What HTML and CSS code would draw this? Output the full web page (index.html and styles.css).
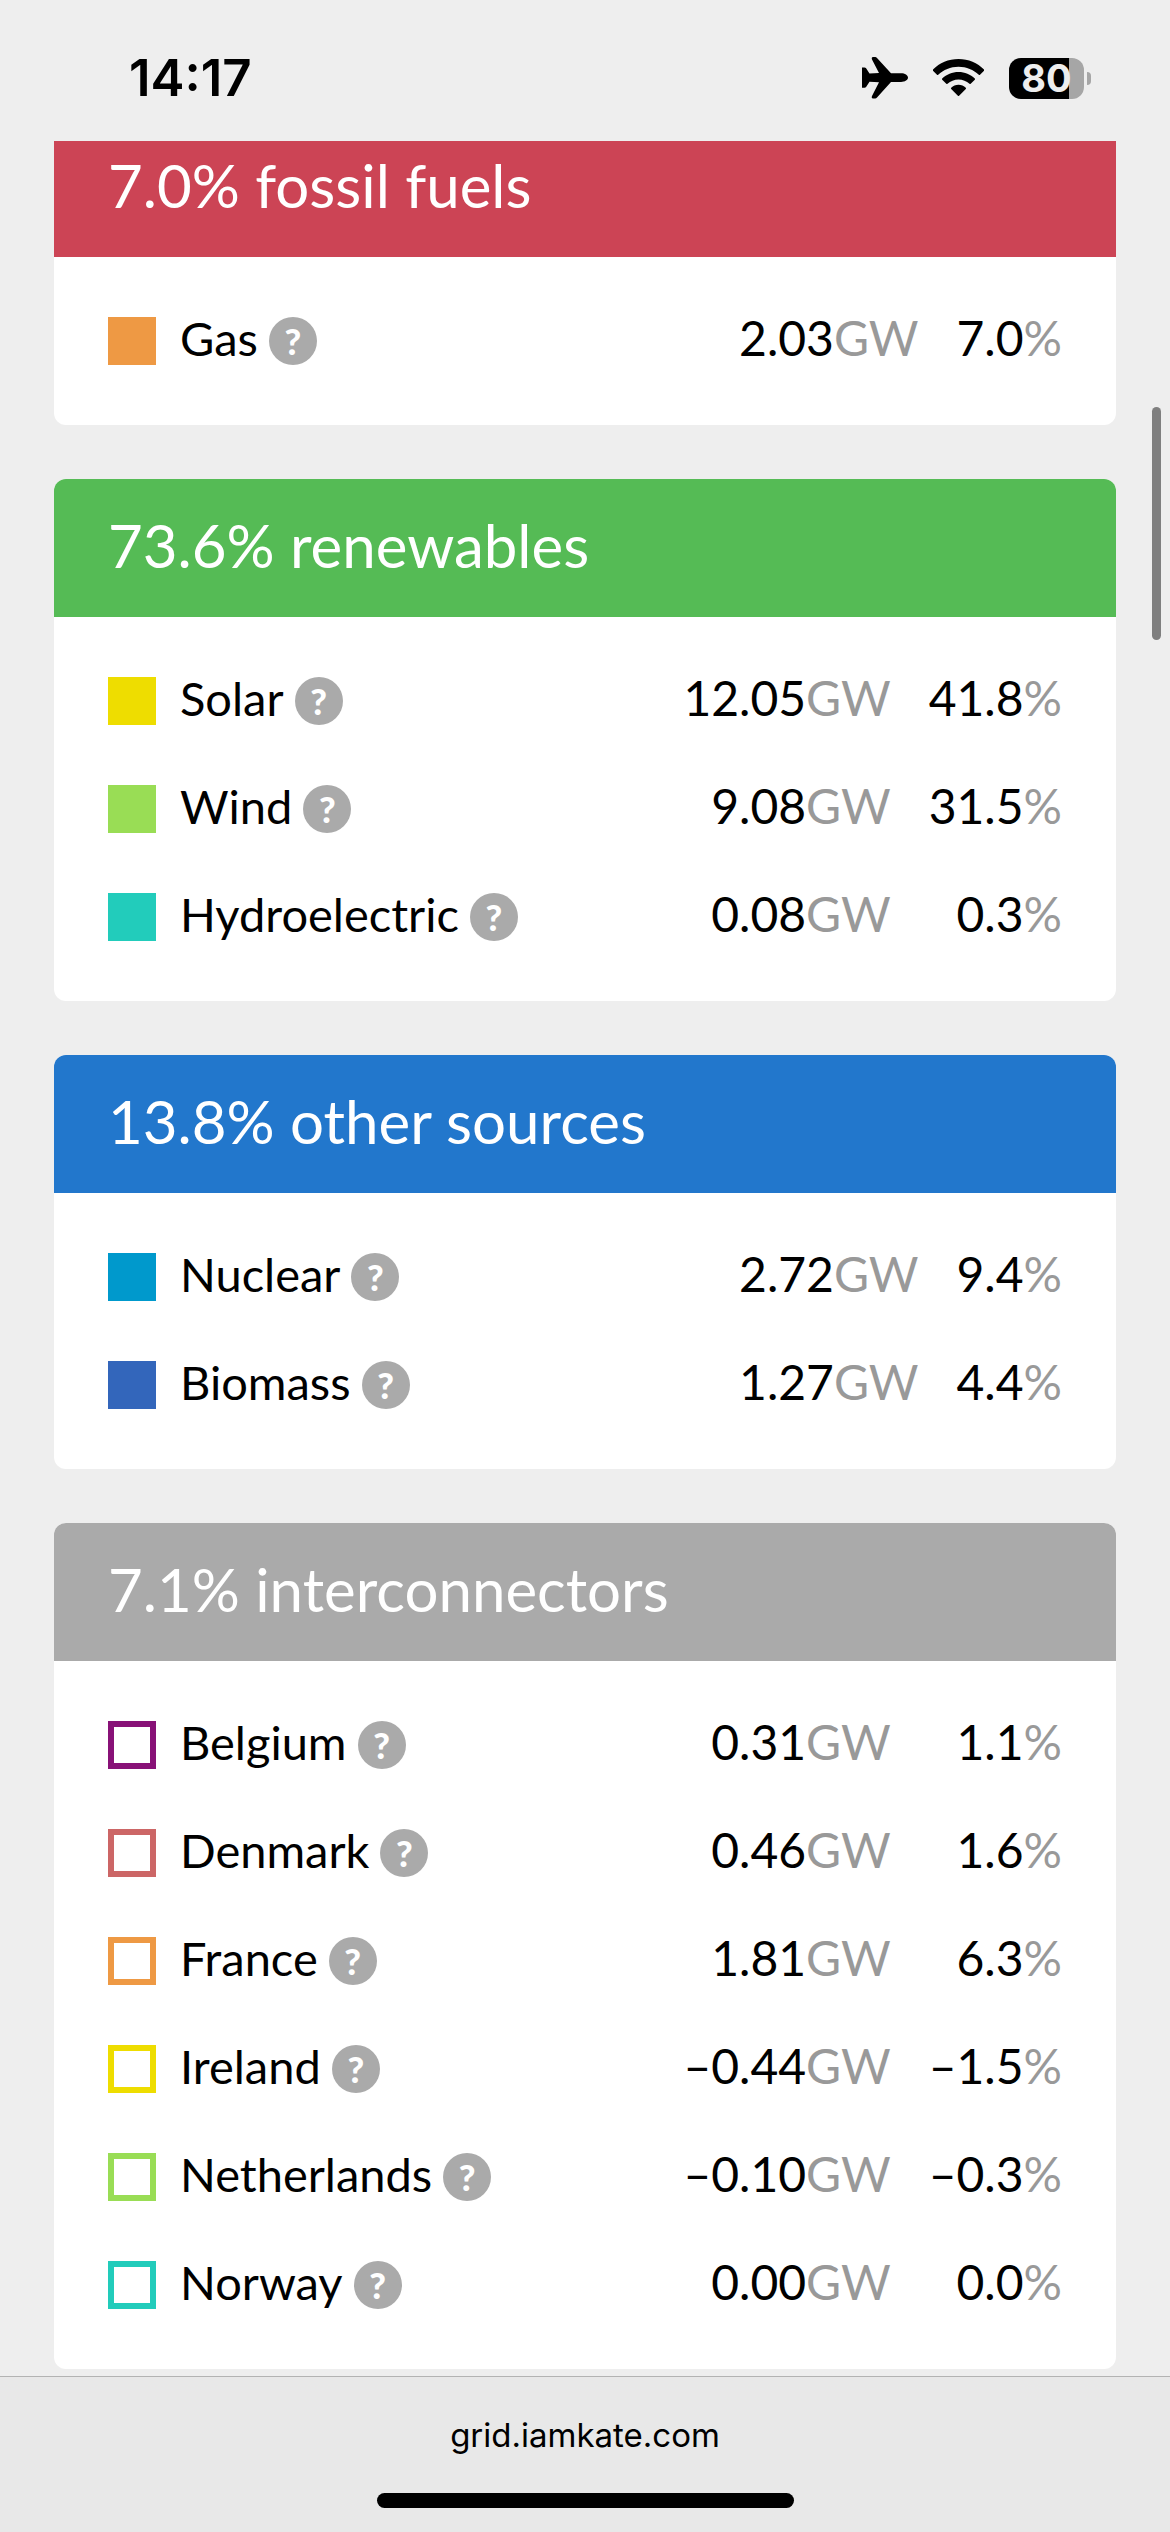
FILE: index.html
```html
<!DOCTYPE html>
<html lang="en">
<head>
<meta charset="utf-8">
<meta name="viewport" content="width=device-width, initial-scale=1">
<title>National Grid: Live</title>
<link rel="stylesheet" href="styles.css">
</head>
<body>
<header class="status">
  <time class="clock">14:17</time>
  <div class="indicators">
    <svg class="plane" viewBox="0 0 46 42" aria-hidden="true"><path d="M0 10.500h2.500q1 0 1.600.8L7.500 16.500 17 16 10 2.500Q9.200 0 11 0h2.200q1 0 1.800.9L29 16.200h10c4 0 7 2 7 4.400s-3 4.400-7 4.400H29L15 40.500q-.8.900-1.800.9H11q-1.800 0-1-2.500L17 25.200l-9.500-.5L4.100 30q-.6.800-1.600.8H0V21z"/></svg>
    <svg class="wifi" viewBox="0 0 51 38" aria-hidden="true"><path d="M25.500 0C35.500 0 44.500 4 51 10.500q.5.600 0 1.200l-4 4q-.6.500-1.200 0C40.500 10.700 33.500 7.700 25.500 7.700S10.500 10.700 5.200 15.700q-.6.500-1.200 0l-4-4q-.5-.6 0-1.200C6.500 4 15.500 0 25.500 0z"/><path d="M25.500 13c6.300 0 12 2.500 16.300 6.500q.6.600 0 1.200l-4.100 4.100q-.6.500-1.200 0c-3-2.700-6.800-4.300-11-4.300s-8 1.600-11 4.300q-.6.500-1.200 0l-4.100-4.100q-.6-.6 0-1.200C13.500 15.500 19.200 13 25.500 13z"/><path d="M25.500 25.800c2.800 0 5.400 1.100 7.300 2.900q.6.600 0 1.200l-6.700 6.900q-.6.500-1.200 0l-6.700-6.900q-.6-.6 0-1.200c1.900-1.800 4.500-2.900 7.300-2.900z"/></svg>
    <div class="battery"><span class="cell">80</span><span class="nub"></span></div>
  </div>
</header>

<main class="page">
  <div class="cards">
    <section class="card">
      <h2 class="title fossil">7.0% fossil fuels</h2>
      <table class="sources">
        <tr><th scope="row"><div class="name"><span class="swatch gas"></span><span class="label">Gas</span><button class="help">?</button></div></th><td>2.03<span class="unit">GW</span></td><td>7.0<span class="unit">%</span></td></tr>
      </table>
    </section>

    <section class="card">
      <h2 class="title renewables">73.6% renewables</h2>
      <table class="sources">
        <tr><th scope="row"><div class="name"><span class="swatch solar"></span><span class="label">Solar</span><button class="help">?</button></div></th><td>12.05<span class="unit">GW</span></td><td>41.8<span class="unit">%</span></td></tr>
        <tr><th scope="row"><div class="name"><span class="swatch wind"></span><span class="label">Wind</span><button class="help">?</button></div></th><td>9.08<span class="unit">GW</span></td><td>31.5<span class="unit">%</span></td></tr>
        <tr><th scope="row"><div class="name"><span class="swatch hydro"></span><span class="label">Hydroelectric</span><button class="help">?</button></div></th><td>0.08<span class="unit">GW</span></td><td>0.3<span class="unit">%</span></td></tr>
      </table>
    </section>

    <section class="card">
      <h2 class="title others">13.8% other sources</h2>
      <table class="sources">
        <tr><th scope="row"><div class="name"><span class="swatch nuclear"></span><span class="label">Nuclear</span><button class="help">?</button></div></th><td>2.72<span class="unit">GW</span></td><td>9.4<span class="unit">%</span></td></tr>
        <tr><th scope="row"><div class="name"><span class="swatch biomass"></span><span class="label">Biomass</span><button class="help">?</button></div></th><td>1.27<span class="unit">GW</span></td><td>4.4<span class="unit">%</span></td></tr>
      </table>
    </section>

    <section class="card">
      <h2 class="title interconnectors">7.1% interconnectors</h2>
      <table class="sources">
        <tr><th scope="row"><div class="name"><span class="swatch belgium"></span><span class="label">Belgium</span><button class="help">?</button></div></th><td>0.31<span class="unit">GW</span></td><td>1.1<span class="unit">%</span></td></tr>
        <tr><th scope="row"><div class="name"><span class="swatch denmark"></span><span class="label">Denmark</span><button class="help">?</button></div></th><td>0.46<span class="unit">GW</span></td><td>1.6<span class="unit">%</span></td></tr>
        <tr><th scope="row"><div class="name"><span class="swatch france"></span><span class="label">France</span><button class="help">?</button></div></th><td>1.81<span class="unit">GW</span></td><td>6.3<span class="unit">%</span></td></tr>
        <tr><th scope="row"><div class="name"><span class="swatch ireland"></span><span class="label">Ireland</span><button class="help">?</button></div></th><td>–0.44<span class="unit">GW</span></td><td>–1.5<span class="unit">%</span></td></tr>
        <tr><th scope="row"><div class="name"><span class="swatch netherlands"></span><span class="label">Netherlands</span><button class="help">?</button></div></th><td>–0.10<span class="unit">GW</span></td><td>–0.3<span class="unit">%</span></td></tr>
        <tr><th scope="row"><div class="name"><span class="swatch norway"></span><span class="label">Norway</span><button class="help">?</button></div></th><td>0.00<span class="unit">GW</span></td><td>0.0<span class="unit">%</span></td></tr>
      </table>
    </section>
  </div>
  <div class="scrollbar"></div>
</main>

<footer class="toolbar">
  <a class="address" href="#">grid.iamkate.com</a>
  <div class="home"></div>
</footer>
</body>
</html>
```
FILE: styles.css
```css
* {
  box-sizing: border-box;
}

body {
  margin: 0;
  min-height: 100vh;
  display: flex;
  flex-direction: column;
  background: #eeeeee;
  color: #000000;
  font-family: Lato, sans-serif;
}

/* Status bar */
.status {
  height: 141px;
  padding: 15px 79px 0 129px;
  display: flex;
  align-items: center;
  justify-content: space-between;
}

.clock {
  font: 600 51px/60px Inter, sans-serif;
}

.indicators {
  display: flex;
  align-items: center;
  gap: 25px;
}

.plane {
  width: 46px;
  height: 42px;
}

.wifi {
  width: 51px;
  height: 38px;
}

.battery {
  display: flex;
  align-items: center;
  gap: 3px;
}

.cell {
  width: 75px;
  border-radius: 12px;
  background: linear-gradient(to right, #000000 80%, #a6a6a6 80%);
  color: #eeeeee;
  font: 700 38px/41px Inter, sans-serif;
  text-align: center;
}

.nub {
  width: 4px;
  height: 13px;
  border-radius: 0 4px 4px 0;
  background: #a6a6a6;
}

/* Scrolled page */
.page {
  position: relative;
  flex: 1;
  overflow: hidden;
  padding: 0 54px 7px;
}

.cards {
  margin-top: -22px;
  display: flex;
  flex-direction: column;
  gap: 54px;
}

.card {
  background: #ffffff;
  border-radius: 12px;
  overflow: hidden;
  padding-bottom: 30px;
}

.title {
  margin: 0 0 30px;
  padding: 30px 54px 36px;
  color: #ffffff;
  font-size: 60px;
  font-weight: 400;
  line-height: 72px;
}

.fossil { background: #cc4455; }
.renewables { background: #55bb55; }
.others { background: #2277cc; }
.interconnectors { background: #aaaaaa; }

.sources {
  width: 100%;
  padding: 0 54px;
  border-spacing: 0;
  font-size: 48px;
  line-height: 60px;
}

.sources th,
.sources td {
  height: 108px;
  padding: 0;
  font-weight: 400;
  white-space: nowrap;
}

.sources th {
  width: 100%;
  font-size: 47px;
}

.sources td {
  padding: 0 0 6px 38px;
  text-align: right;
}

.name {
  display: flex;
  align-items: center;
}

.label {
  padding-bottom: 6px;
}

.unit {
  color: #999999;
}

.help {
  width: 48px;
  height: 48px;
  margin: 0 0 0 11px;
  padding: 0;
  border: 0;
  border-radius: 50%;
  background: #aaaaaa;
  color: #ffffff;
  font: 900 36px/48px Lato, sans-serif;
  text-align: center;
}

.swatch {
  width: 48px;
  height: 48px;
  margin-right: 24px;
  border: 6px solid;
}

.gas { border-color: #ee9944; background: #ee9944; }
.solar { border-color: #eedd00; background: #eedd00; }
.wind { border-color: #99dd55; background: #99dd55; }
.hydro { border-color: #22ccbb; background: #22ccbb; }
.nuclear { border-color: #0099cc; background: #0099cc; }
.biomass { border-color: #3366bb; background: #3366bb; }
.belgium { border-color: #881177; }
.denmark { border-color: #cc6666; }
.france { border-color: #ee9944; }
.ireland { border-color: #eedd00; }
.netherlands { border-color: #99dd55; }
.norway { border-color: #22ccbb; }

.scrollbar {
  position: absolute;
  top: 266px;
  right: 9px;
  width: 9px;
  height: 233px;
  border-radius: 5px;
  background: #7f7f7f;
}

/* Browser toolbar */
.toolbar {
  padding: 38px 0 24px;
  display: flex;
  flex-direction: column;
  align-items: center;
  gap: 38px;
  border-top: 1px solid #b3b3b3;
  background: #e8e8e8;
}

.address {
  color: #000000;
  font: 400 33px/40px Inter, sans-serif;
  text-decoration: none;
}

.home {
  width: 417px;
  height: 15px;
  border-radius: 8px;
  background: #000000;
}
```
